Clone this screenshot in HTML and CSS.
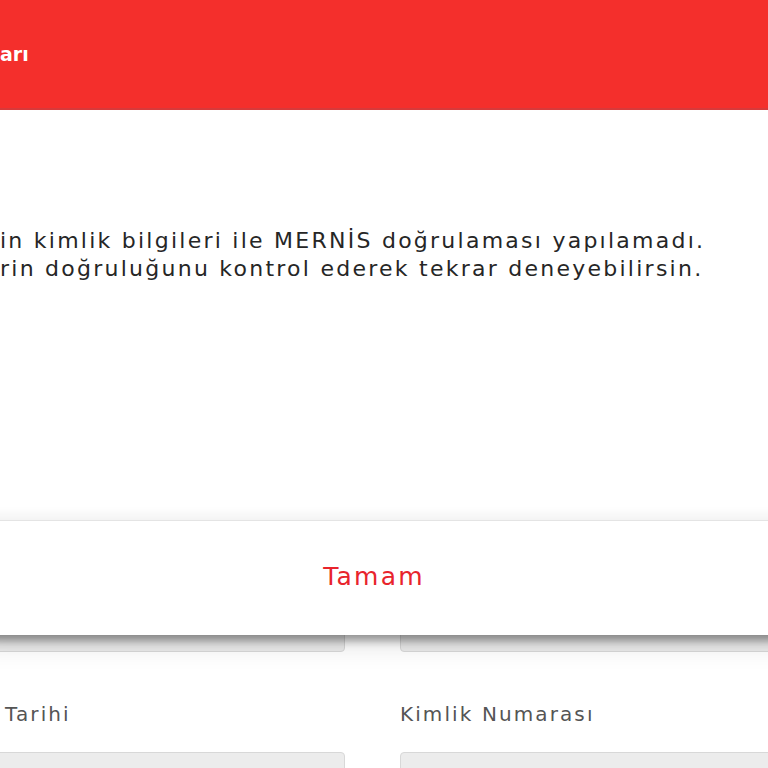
FILE: index.html
```html
<!DOCTYPE html>
<html lang="tr">
<head>
    <meta charset="UTF-8">
    <title>Kimlik Doğrulama</title>
    <link rel="stylesheet" href="styles.css">
</head>
<body>
    <div class="form">
        <div class="field">
            <div class="input"></div>
        </div>
        <div class="field">
            <div class="input"></div>
        </div>
        <div class="field">
            <label>Tarihi</label>
            <div class="input"></div>
        </div>
        <div class="field">
            <label>Kimlik Numarası</label>
            <div class="input"></div>
        </div>
    </div>

    <div class="dialog">
        <div class="dialog-header">arı</div>
        <div class="dialog-body">
            <p>in kimlik bilgileri ile MERNİS doğrulaması yapılamadı.<br>
            rin doğruluğunu kontrol ederek tekrar deneyebilirsin.</p>
        </div>
        <div class="dialog-actions">
            <button class="btn-ok">Tamam</button>
        </div>
    </div>
</body>
</html>
```

FILE: styles.css
```css
        html, body {
            margin: 0;
            height: 768px;
            overflow: hidden;
            background-color: #fff;
        }
        body {
            font-family: 'DejaVu Sans', 'Open Sans', sans-serif;
            position: relative;
        }
        .form {
            display: grid;
            grid-template-columns: 365px 408px;
            column-gap: 55px;
            row-gap: 48px;
            margin-left: -20px;
            padding-top: 604px;
        }
        .field label {
            display: block;
            padding-left: 25px;
            font-size: 20px;
            letter-spacing: 2.1px;
            line-height: 28px;
            color: #555;
            margin-bottom: 24px;
        }
        .field:nth-child(even) label {
            padding-left: 0;
        }
        .input {
            height: 48px;
            background-color: #ececec;
            border: 1px solid #d8d8d8;
            border-radius: 4px;
            box-sizing: border-box;
        }
        .dialog {
            position: absolute;
            top: 0;
            left: -20px;
            right: -20px;
            background: #fff;
            box-shadow: 0 6px 8px rgba(0, 0, 0, 0.36), 0 12px 24px rgba(0, 0, 0, 0.1);
        }
        .dialog-header {
            height: 108px;
            padding-left: 20px;
            background-color: #f42f2c;
            border-bottom: 2px solid #d8393a;
            color: #fff;
            font-weight: 700;
            font-size: 19px;
            line-height: 108px;
        }
        .dialog-body {
            height: 410px;
            padding-left: 20px;
        }
        .dialog-body p {
            margin: 0;
            padding-top: 117px;
            font-size: 22px;
            letter-spacing: 2.25px;
            line-height: 28px;
            color: #262626;
        }
        .dialog-actions {
            height: 114px;
            border-top: 1px solid #e4e4e4;
            box-shadow: 0 -6px 10px rgba(0, 0, 0, 0.05);
            display: flex;
            align-items: center;
            justify-content: center;
        }
        .btn-ok {
            background: none;
            border: none;
            padding: 0;
            font-family: inherit;
            font-size: 25px;
            letter-spacing: 2.2px;
            color: #e8242c;
            margin: 0 20px 4px 0;
            cursor: pointer;
        }
```
